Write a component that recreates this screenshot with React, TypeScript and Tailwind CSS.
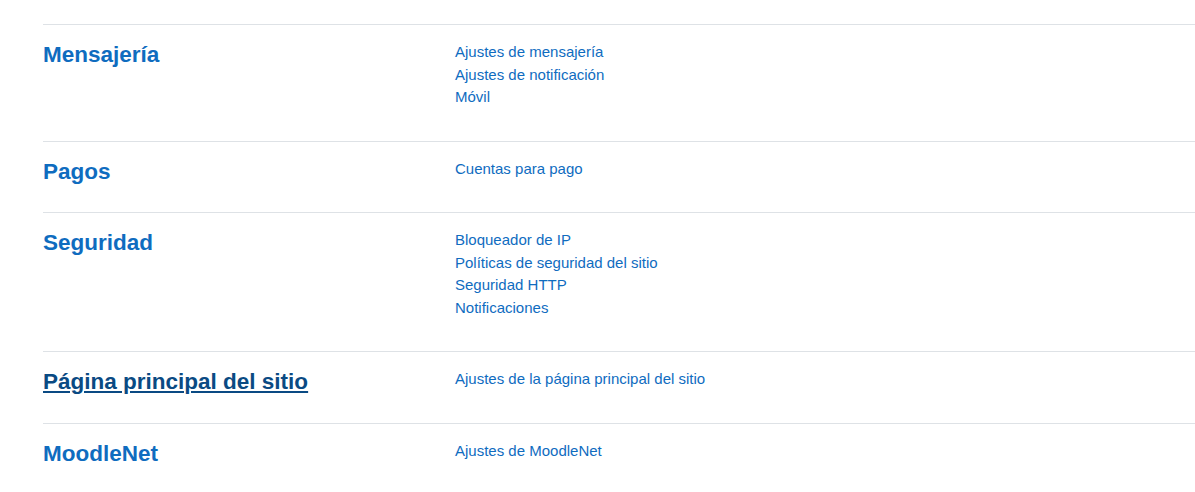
const sections: { title: string; links: string[]; active?: boolean }[] = [
	{
		title: "Mensajería",
		links: ["Ajustes de mensajería", "Ajustes de notificación", "Móvil"],
	},
	{ title: "Pagos", links: ["Cuentas para pago"] },
	{
		title: "Seguridad",
		links: [
			"Bloqueador de IP",
			"Políticas de seguridad del sitio",
			"Seguridad HTTP",
			"Notificaciones",
		],
	},
	{
		title: "Página principal del sitio",
		links: ["Ajustes de la página principal del sitio"],
		active: true,
	},
	{ title: "MoodleNet", links: ["Ajustes de MoodleNet"] },
];

export default function App() {
	return (
		<div
			className="min-h-[492px] bg-white pl-[43px] pt-[24px]"
			style={{ fontFamily: '"Liberation Sans", Arial, sans-serif' }}
		>
			{sections.map((s) => (
				<div key={s.title} className="border-t border-[#dee2e6] pb-4 pt-4">
					<div className="flex">
						<div className="w-[412px] shrink-0">
							<h4
								className={
									s.active
										? "mb-2 text-[22.5px] font-bold leading-[1.2] text-[#0a4a83] underline"
										: "mb-2 text-[22.5px] font-bold leading-[1.2] text-[#0f6cbf]"
								}
							>
								<a href="#">{s.title}</a>
							</h4>
						</div>
						<ul className="mb-4 text-[15px] leading-[1.5] text-[#0f6cbf]">
							{s.links.map((l) => (
								<li key={l}>
									<a href="#">{l}</a>
								</li>
							))}
						</ul>
					</div>
				</div>
			))}
		</div>
	);
}
